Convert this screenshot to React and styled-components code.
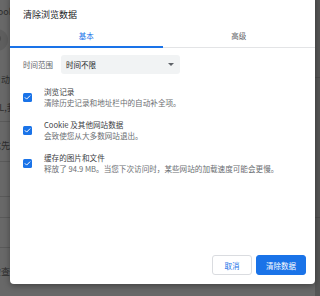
import React from 'react';
import styled, { createGlobalStyle } from 'styled-components';

const GlobalStyle = createGlobalStyle`
  html, body {
    margin: 0;
    padding: 0;
    width: 320px;
    height: 296px;
    overflow: hidden;
  }
  body {
    font-family: "Noto Sans CJK SC", "Noto Sans", "Liberation Sans", sans-serif;
  }
`;

const Page = styled.div`
  position: relative;
  width: 320px;
  height: 296px;
  overflow: hidden;
  background: #686868;
  display: flex;
`;

const PageColumn = styled.div`
  flex: 1;
  display: flex;
  flex-direction: column;
  margin-left: -8px;
`;

const PageRow = styled.div`
  height: ${(p) => p.$h}px;
  box-sizing: border-box;
  padding-top: ${(p) => p.$pt || 0}px;
  display: flex;
  align-items: ${(p) => (p.$center ? 'center' : 'flex-start')};
  font-size: 9px;
  line-height: 12px;
  color: #2e2e2e;
  border-bottom: ${(p) => (p.$line ? '1px solid #5a5a5a' : 'none')};
  white-space: nowrap;
`;

const Avatar = styled.div`
  width: 22px;
  height: 22px;
  border-radius: 50%;
  background: #5e5e5e;
  margin-left: -6px;
  position: relative;
  overflow: hidden;

  &::after {
    content: '';
    position: absolute;
    left: 6px;
    top: 5px;
    width: 9px;
    height: 9px;
    border-radius: 50%;
    background: #4c4c4c;
  }
`;

const PageEdge = styled.div`
  width: 5px;
  background: #555555;
  display: flex;
  flex-direction: column;
`;

const EdgeLine = styled.div`
  margin-top: ${(p) => p.$top}px;
  height: 1px;
  background: #4b4b4b;
`;

const Dialog = styled.div`
  position: absolute;
  left: 10px;
  top: -6px;
  width: 305px;
  height: 290px;
  background: #ffffff;
  border-radius: 4px;
  box-shadow: 0 2px 6px rgba(0, 0, 0, 0.35);
  display: flex;
  flex-direction: column;
`;

const Title = styled.div`
  padding: 15px 13px 0;
  font-size: 9px;
  line-height: 12px;
  color: #202124;
`;

const TabBar = styled.div`
  margin-top: 4px;
  display: flex;
  border-bottom: 1px solid #e3e4e6;
`;

const Tab = styled.div`
  flex: 1;
  height: 21px;
  display: flex;
  align-items: center;
  justify-content: center;
  font-size: 7.5px;
  color: ${(p) => (p.$active ? '#1a73e8' : '#5f6368')};
  border-bottom: 2px solid ${(p) => (p.$active ? '#1a73e8' : 'transparent')};
  margin-bottom: -1px;
`;

const Body = styled.div`
  flex: 1;
  padding: 0 13px;
  display: flex;
  flex-direction: column;
`;

const RangeRow = styled.div`
  margin-top: 7px;
  display: flex;
  align-items: center;
  gap: 8px;
`;

const Label = styled.span`
  font-size: 7.5px;
  color: #5f6368;
  width: 30px;
  white-space: nowrap;
`;

const Select = styled.div`
  width: 119px;
  height: 19px;
  box-sizing: border-box;
  padding: 0 5px;
  border-radius: 3px;
  background: #f1f3f4;
  display: flex;
  align-items: center;
  justify-content: space-between;
  font-size: 7.5px;
  color: #202124;
`;

const Arrow = styled.span`
  width: 0;
  height: 0;
  border-left: 3px solid transparent;
  border-right: 3px solid transparent;
  border-top: 3px solid #5f6368;
  margin-right: 1px;
`;

const OptionList = styled.div`
  margin-top: 12px;
  display: flex;
  flex-direction: column;
  gap: 11px;
`;

const Option = styled.div`
  display: flex;
  align-items: center;
  gap: 12px;
`;

const Box = styled.div`
  width: 9px;
  height: 9px;
  border-radius: 1.5px;
  background: #1a73e8;
  display: flex;
  align-items: center;
  justify-content: center;
  flex-shrink: 0;
`;

const OptionText = styled.div`
  display: flex;
  flex-direction: column;
`;

const OptionTitle = styled.div`
  font-size: 7.6px;
  line-height: 11px;
  color: #3c4043;
  white-space: nowrap;
`;

const OptionSub = styled.div`
  font-size: 7.6px;
  line-height: 11px;
  color: #6b6e72;
  white-space: nowrap;
`;

const Footer = styled.div`
  display: flex;
  justify-content: flex-end;
  gap: 4px;
  padding: 0 9px 9px;
`;

const Button = styled.button`
  height: 20px;
  box-sizing: border-box;
  padding: 0;
  width: ${(p) => (p.$primary ? '50px' : '40px')};
  border-radius: 3px;
  border: 1px solid ${(p) => (p.$primary ? '#1a73e8' : '#dadce0')};
  background: ${(p) => (p.$primary ? '#1a73e8' : '#ffffff')};
  color: ${(p) => (p.$primary ? '#ffffff' : '#1a73e8')};
  font-family: inherit;
  font-size: 7.5px;
`;

const Check = () => (
  <svg width="7" height="7" viewBox="0 0 24 24" fill="none">
    <path d="M4 12.5l5 5L20 6.5" stroke="#fff" strokeWidth="3.4" strokeLinecap="square" />
  </svg>
);

const options = [
  { title: '浏览记录', sub: '清除历史记录和地址栏中的自动补全项。' },
  { title: 'Cookie 及其他网站数据', sub: '会致使您从大多数网站退出。' },
  { title: '缓存的图片和文件', sub: '释放了 94.9 MB。当您下次访问时，某些网站的加载速度可能会更慢。' },
];

const App = () => {
  return (
    <Page>
      <GlobalStyle />
      <PageColumn>
        <PageRow $h={24} $pt={6}>Cookie</PageRow>
        <PageRow $h={32} $center>
          <Avatar />
        </PageRow>
        <PageRow $h={46} $pt={18}>自动补全</PageRow>
        <PageRow $h={20} $pt={0} $line>ML,我们</PageRow>
        <PageRow $h={40} $pt={18} $line>优先</PageRow>
        <PageRow $h={35} $line />
        <PageRow $h={21} $line />
        <PageRow $h={30} $line />
        <PageRow $h={48} $pt={18}>检查</PageRow>
      </PageColumn>
      <PageEdge>
        <EdgeLine $top={77} />
        <EdgeLine $top={139} />
      </PageEdge>

      <Dialog>
        <Title>清除浏览数据</Title>
        <TabBar>
          <Tab $active>基本</Tab>
          <Tab>高级</Tab>
        </TabBar>
        <Body>
          <RangeRow>
            <Label>时间范围</Label>
            <Select>
              时间不限
              <Arrow />
            </Select>
          </RangeRow>
          <OptionList>
            {options.map((o) => (
              <Option key={o.title}>
                <Box>
                  <Check />
                </Box>
                <OptionText>
                  <OptionTitle>{o.title}</OptionTitle>
                  <OptionSub>{o.sub}</OptionSub>
                </OptionText>
              </Option>
            ))}
          </OptionList>
        </Body>
        <Footer>
          <Button>取消</Button>
          <Button $primary>清除数据</Button>
        </Footer>
      </Dialog>
    </Page>
  );
};

export default App;
